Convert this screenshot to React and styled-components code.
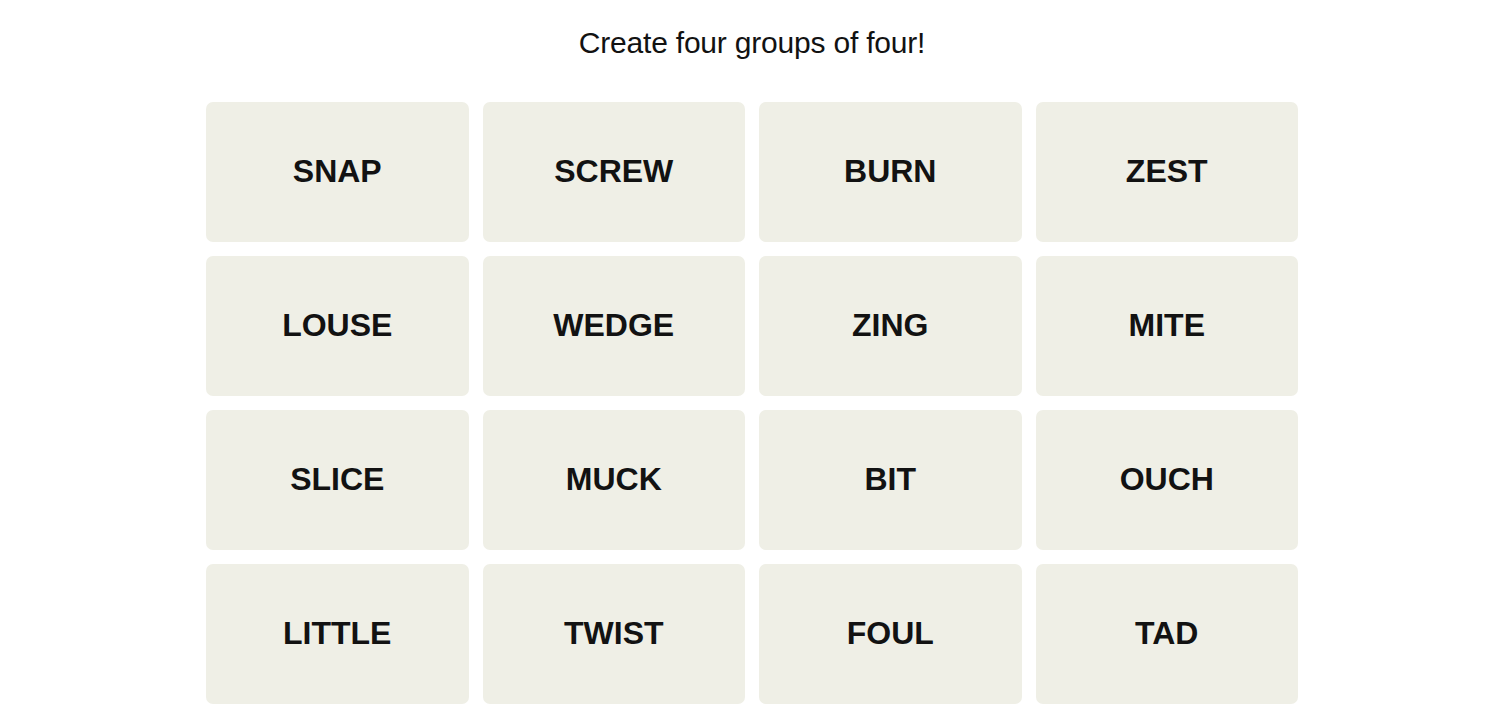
import React from 'react';
import styled, { createGlobalStyle } from 'styled-components';

const GlobalStyle = createGlobalStyle`
  body {
    margin: 0;
    background: #ffffff;
    font-family: "Liberation Sans", Arial, sans-serif;
    color: #121212;
  }
`;

const Page = styled.main`
  display: flex;
  flex-direction: column;
  align-items: center;
  padding: 24px 0 0 4px;
`;

const Title = styled.h1`
  margin: 0;
  font-size: 30px;
  font-weight: 400;
  line-height: 38px;
  letter-spacing: -0.2px;
`;

const Board = styled.div`
  margin-top: 40px;
  display: grid;
  grid-template-columns: repeat(4, 262.5px);
  grid-auto-rows: 140px;
  gap: 14px;
`;

const Tile = styled.button`
  display: flex;
  align-items: center;
  justify-content: center;
  border: none;
  border-radius: 7px;
  background: #efefe6;
  color: #121212;
  font-family: "Liberation Sans", Arial, sans-serif;
  font-size: 32px;
  font-weight: 700;
  text-transform: uppercase;
  padding: 0 0 2px;
  cursor: pointer;
`;

const words = [
  'SNAP', 'SCREW', 'BURN', 'ZEST',
  'LOUSE', 'WEDGE', 'ZING', 'MITE',
  'SLICE', 'MUCK', 'BIT', 'OUCH',
  'LITTLE', 'TWIST', 'FOUL', 'TAD',
];

const App = () => (
  <>
    <GlobalStyle />
    <Page>
      <Title>Create four groups of four!</Title>
      <Board>
        {words.map((w) => (
          <Tile key={w}>{w}</Tile>
        ))}
      </Board>
    </Page>
  </>
);

export default App;
